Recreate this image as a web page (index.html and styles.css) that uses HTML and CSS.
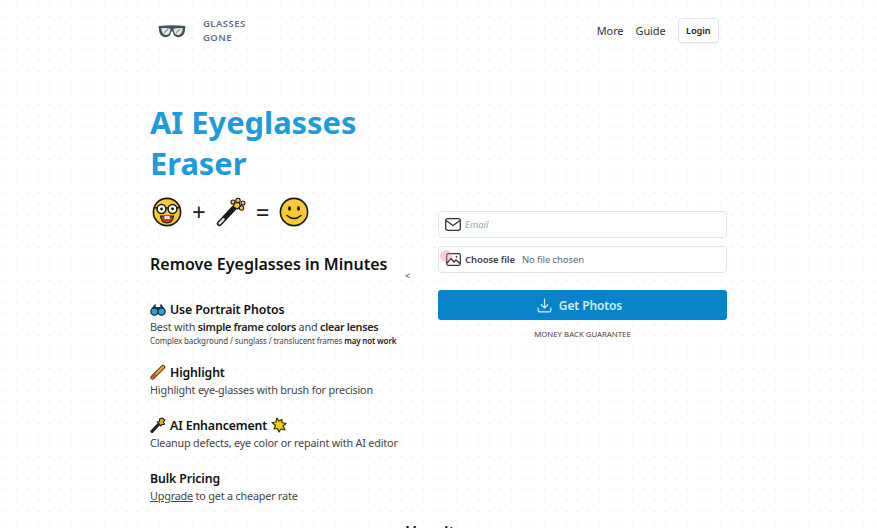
FILE: index.html
```html
<!DOCTYPE html>
<html lang="en">
<head>
  <meta charset="UTF-8">
  <title>Glasses Gone</title>
  <link rel="stylesheet" href="styles.css">
</head>
<body>
  <div class="page">
    <header>
      <a class="logo">
        <svg width="28" height="14" viewBox="0 0 28 14">
          <path d="M.5 2 Q14 .5 27.5 2 L27 6 Q26.5 13.2 20 13.2 Q15.5 13.2 14.8 7.5 L13.2 7.5 Q12.5 13.2 8 13.2 Q1.5 13.2 1 6 Z" fill="#46555b"/>
          <path d="M3.2 4.3 Q8 3.4 12.4 4.8 Q12.2 11 8 11 Q3.8 11 3.2 4.3 Z" fill="#e4eaec"/>
          <path d="M24.8 4.3 Q20 3.4 15.6 4.8 Q15.8 11 20 11 Q24.2 11 24.8 4.3 Z" fill="#e4eaec"/>
          <path d="M6 9 L10 5 M18 9 L22 5" stroke="#87959a" stroke-width="1.2"/>
        </svg>
        <span class="logo-text">GLASSES<br>GONE</span>
      </a>
      <nav>
        <a>More</a>
        <a>Guide</a>
        <a class="login">Login</a>
      </nav>
    </header>

    <main class="hero">
      <div class="intro">
        <h1>AI Eyeglasses Eraser</h1>
        <div class="equation">
          <svg width="30" height="30" viewBox="0 0 30 30">
            <circle cx="15" cy="15" r="13.6" fill="#fcc932" stroke="#1a1a1a" stroke-width="1.6"/>
            <circle cx="9.5" cy="12" r="4.4" fill="#fff" stroke="#1a1a1a" stroke-width="1.5"/>
            <circle cx="20.5" cy="12" r="4.4" fill="#fff" stroke="#1a1a1a" stroke-width="1.5"/>
            <circle cx="9.5" cy="12" r="1.4" fill="#1a1a1a"/>
            <circle cx="20.5" cy="12" r="1.4" fill="#1a1a1a"/>
            <path d="M1.8 10.5 L5 11 M14 11 L16 11 M25 11 L28.2 10.5" stroke="#1a1a1a" stroke-width="1.3"/>
            <path d="M8.5 19 H21.5 Q20.5 26 15 26 Q9.5 26 8.5 19 Z" fill="#d8362a" stroke="#1a1a1a" stroke-width="1.2"/>
            <rect x="12.5" y="19" width="2.4" height="3" fill="#fff"/>
            <rect x="15.2" y="19" width="2.4" height="3" fill="#fff"/>
          </svg>
          <span>+</span>
          <svg width="30" height="30" viewBox="0 0 30 30">
            <path d="M3.5 26.5 L18 11" stroke="#1a1a1a" stroke-width="5.4" stroke-linecap="round"/>
            <path d="M3.6 26.4 L7.5 22.2" stroke="#e8e8e8" stroke-width="2.4" stroke-linecap="round"/>
            <circle cx="17" cy="5" r="2" fill="#fcc932" stroke="#1a1a1a" stroke-width="1.1"/>
            <circle cx="22" cy="3.4" r="2.2" fill="#fcc932" stroke="#1a1a1a" stroke-width="1.1"/>
            <circle cx="27" cy="6" r="2" fill="#fcc932" stroke="#1a1a1a" stroke-width="1.1"/>
            <circle cx="25.5" cy="11" r="2.2" fill="#fcc932" stroke="#1a1a1a" stroke-width="1.1"/>
            <path d="M19 6 L23 5.5 L24.5 9 L21.5 12 L17 9.5 Z" fill="#fcc932" stroke="#1a1a1a" stroke-width="1.2" stroke-linejoin="round"/>
          </svg>
          <span>=</span>
          <svg width="30" height="30" viewBox="0 0 30 30">
            <circle cx="15" cy="15" r="13.6" fill="#fcc932" stroke="#1a1a1a" stroke-width="1.6"/>
            <ellipse cx="10.5" cy="11.5" rx="1.5" ry="2.2" fill="#1a1a1a"/>
            <ellipse cx="19.5" cy="11.5" rx="1.5" ry="2.2" fill="#1a1a1a"/>
            <path d="M8 18.5 Q15 24.5 22 18.5" fill="none" stroke="#1a1a1a" stroke-width="1.6" stroke-linecap="round"/>
          </svg>
        </div>

        <h2>Remove Eyeglasses in Minutes</h2>

        <section class="step">
          <h3>
            <svg width="16" height="13" viewBox="0 0 16 13">
              <path d="M1 6.5 L4.5 1.5 H6.2 L5.5 4 H10.5 L9.8 1.5 H11.5 L15 6.5 Z" fill="#1c3a4a"/>
              <circle cx="4.5" cy="8.5" r="3.7" fill="#2f9fd0" stroke="#14262f" stroke-width="1.2"/>
              <circle cx="11.5" cy="8.5" r="3.7" fill="#2f9fd0" stroke="#14262f" stroke-width="1.2"/>
            </svg>
            Use Portrait Photos
          </h3>
          <p>Best with <b>simple frame colors</b> and <b>clear lenses</b></p>
          <p class="note">Complex background / sunglass / translucent frames <b>may not work</b></p>
        </section>

        <section class="step">
          <h3>
            <svg width="16" height="16" viewBox="0 0 16 16">
              <path d="M2.5 13.5 L13 3" stroke="#33261a" stroke-width="4.4" stroke-linecap="round"/>
              <path d="M2.5 13.5 L13 3" stroke="#f0a030" stroke-width="2.6" stroke-linecap="round"/>
              <path d="M2.3 13.7 L5 11" stroke="#d2542a" stroke-width="2.8" stroke-linecap="round"/>
            </svg>
            Highlight
          </h3>
          <p>Highlight eye-glasses with brush for precision</p>
        </section>

        <section class="step">
          <h3>
            <svg width="16" height="16" viewBox="0 0 16 16">
              <path d="M2 14.3 L9.5 6.5" stroke="#222" stroke-width="3.2" stroke-linecap="round"/>
              <path d="M9.5 2 L12 1 L15 3 L13.5 5 L14.5 7.5 L12 7.5 L10.5 9 L9 6.5 L7 5 L9.5 4.5 Z" fill="#d8b420" stroke="#222" stroke-width="1.1" stroke-linejoin="round"/>
            </svg>
            AI Enhancement
            <svg width="16" height="16" viewBox="0 0 16 16">
              <path d="M6 1 L8 4 L11 2.5 L10.8 5.5 L15 6.5 L12 9 L14 13 L10 12 L8 15 L6.5 11.5 L3 12 L4.5 8.5 L1 5.5 L5 5 Z" fill="#f5d010" stroke="#3a3000" stroke-width="1.2" stroke-linejoin="round"/>
            </svg>
          </h3>
          <p>Cleanup defects, eye color or repaint with AI editor</p>
        </section>

        <section class="step">
          <h3>Bulk Pricing</h3>
          <p><u>Upgrade</u> to get a cheaper rate</p>
        </section>

        <span class="caret">&lt;</span>
      </div>

      <form class="upload">
        <label class="field">
          <svg width="16" height="13" viewBox="0 0 16 13" fill="none" stroke="#333" stroke-width="1.3">
            <rect x=".7" y=".7" width="14.6" height="11.6" rx="2"/>
            <path d="M1 2.5 L8 7.5 L15 2.5"/>
          </svg>
          <input type="email" placeholder="Email">
        </label>
        <label class="field file-field">
          <svg width="15" height="13" viewBox="0 0 15 13" fill="none" stroke="#333" stroke-width="1.2">
            <rect x=".7" y=".7" width="13.6" height="11.6" rx="1.5"/>
            <path d="M1 10 L5 5.5 L8 9 L10 7 L14 10.5" stroke-width="1.3"/>
            <circle cx="10.5" cy="3.8" r=".9" fill="#333" stroke="none"/>
          </svg>
          <span class="choose">Choose file</span>
          <span class="no-file">No file chosen</span>
          <span class="cursor-dot"></span>
        </label>
        <button type="button">
          <svg width="15" height="15" viewBox="0 0 16 16" fill="none" stroke="#d7ecf8" stroke-width="1.3" stroke-linecap="round" stroke-linejoin="round">
            <path d="M8 1 V10.5 M4.5 7.2 L8 10.7 L11.5 7.2"/>
            <path d="M1.2 10.5 V13 Q1.2 14.8 3 14.8 H13 Q14.8 14.8 14.8 13 V10.5"/>
          </svg>
          Get Photos
        </button>
        <p class="guarantee">MONEY BACK GUARANTEE</p>
      </form>
    </main>

    <h2 class="how">How it</h2>
  </div>
</body>
</html>
```

FILE: styles.css
```css
html, body {
  height: 100%;
}

body {
  margin: 0;
  overflow: hidden;
  font-family: "Noto Sans", "Open Sans", sans-serif;
  color: #111;
  background-color: #fff;
  background-image: radial-gradient(#f3f5f8 1px, transparent 1.2px);
  background-size: 11px 11px;
}

.page {
  width: 577px;
  margin-left: 150px;
}

header {
  display: flex;
  justify-content: space-between;
  align-items: center;
  height: 61px;
}

.logo {
  display: flex;
  align-items: center;
  gap: 17px;
  padding-left: 8px;
}

.logo-text {
  font-size: 9.5px;
  line-height: 14px;
  font-weight: 600;
  letter-spacing: 0.45px;
  color: #667085;
}

nav {
  display: flex;
  align-items: center;
  gap: 12px;
  padding-right: 8px;
  font-size: 11px;
  letter-spacing: -0.1px;
  color: #333;
}

.login {
  padding: 5px 7.5px;
  border: 1px solid #dfe3e8;
  border-radius: 4px;
  background: #fff;
  font-size: 9.2px;
  font-weight: 600;
  color: #222;
  box-shadow: 0 1px 1px rgba(0,0,0,0.05);
}

.hero {
  display: grid;
  grid-template-columns: 288px 289px;
  align-items: center;
}

.intro {
  position: relative;
  padding-top: 41px;
}

h1 {
  margin: 0;
  width: 230px;
  font-size: 30.8px;
  line-height: 41px;
  font-weight: 700;
  color: #1d9bdc;
}

.equation {
  display: flex;
  align-items: center;
  gap: 10px;
  margin-top: 13px;
  padding-left: 2px;
  font-size: 24px;
  line-height: 30px;
  color: #222;
}

.intro h2 {
  margin: 25px 0 24px;
  font-size: 16px;
  line-height: 24px;
  font-weight: 600;
}

.step {
  margin-bottom: 17px;
}

.step h3 {
  display: flex;
  align-items: center;
  gap: 4px;
  height: 18px;
  margin: 0;
  font-size: 12.3px;
  letter-spacing: -0.12px;
  font-weight: 600;
}

.step p {
  margin: 0;
  font-size: 10.8px;
  line-height: 18px;
  letter-spacing: -0.18px;
  color: #444;
}

.step p b {
  font-weight: 600;
  letter-spacing: -0.3px;
  color: #222;
}

.step p.note {
  font-size: 8px;
  line-height: 10px;
  letter-spacing: -0.12px;
}

.step p.note b {
  letter-spacing: -0.15px;
}

.caret {
  position: absolute;
  top: 208px;
  left: 255px;
  font-size: 9px;
  color: #333;
}

.upload {
  display: flex;
  flex-direction: column;
  margin-top: -32px;
}

.field {
  position: relative;
  display: flex;
  align-items: center;
  gap: 4px;
  height: 25px;
  margin-bottom: 8px;
  padding-left: 6px;
  border: 1px solid #dbe5f0;
  border-radius: 4px;
  background: #fff;
  font-size: 9.5px;
  letter-spacing: -0.1px;
}

.field input {
  flex: 1;
  border: none;
  outline: none;
  padding: 0;
  background: transparent;
  font: italic 9.5px "Noto Sans", sans-serif;
}

.field input::placeholder {
  color: #98a2b8;
}

.file-field {
  padding-left: 7px;
  margin-bottom: 17px;
}

.choose {
  font-weight: 600;
  color: #444;
}

.no-file {
  margin-left: 3px;
  color: #667;
}

.cursor-dot {
  position: absolute;
  top: 3px;
  left: 1px;
  width: 12px;
  height: 12px;
  border-radius: 50%;
  background: rgba(240,120,130,0.35);
}

button {
  display: flex;
  justify-content: center;
  align-items: center;
  gap: 7px;
  height: 30px;
  padding: 0 6px 0 0;
  border: none;
  border-radius: 3px;
  background-color: #0683c9;
  color: #d7ecf8;
  font-family: inherit;
  font-size: 12px;
  letter-spacing: -0.1px;
  font-weight: 600;
}

.guarantee {
  margin: 8px 0 0;
  text-align: center;
  font-size: 7.8px;
  line-height: 12px;
  color: #444;
}

.how {
  margin: -1px 0 0;
  padding-right: 17px;
  text-align: center;
  font-size: 16px;
  font-weight: 600;
}
```
